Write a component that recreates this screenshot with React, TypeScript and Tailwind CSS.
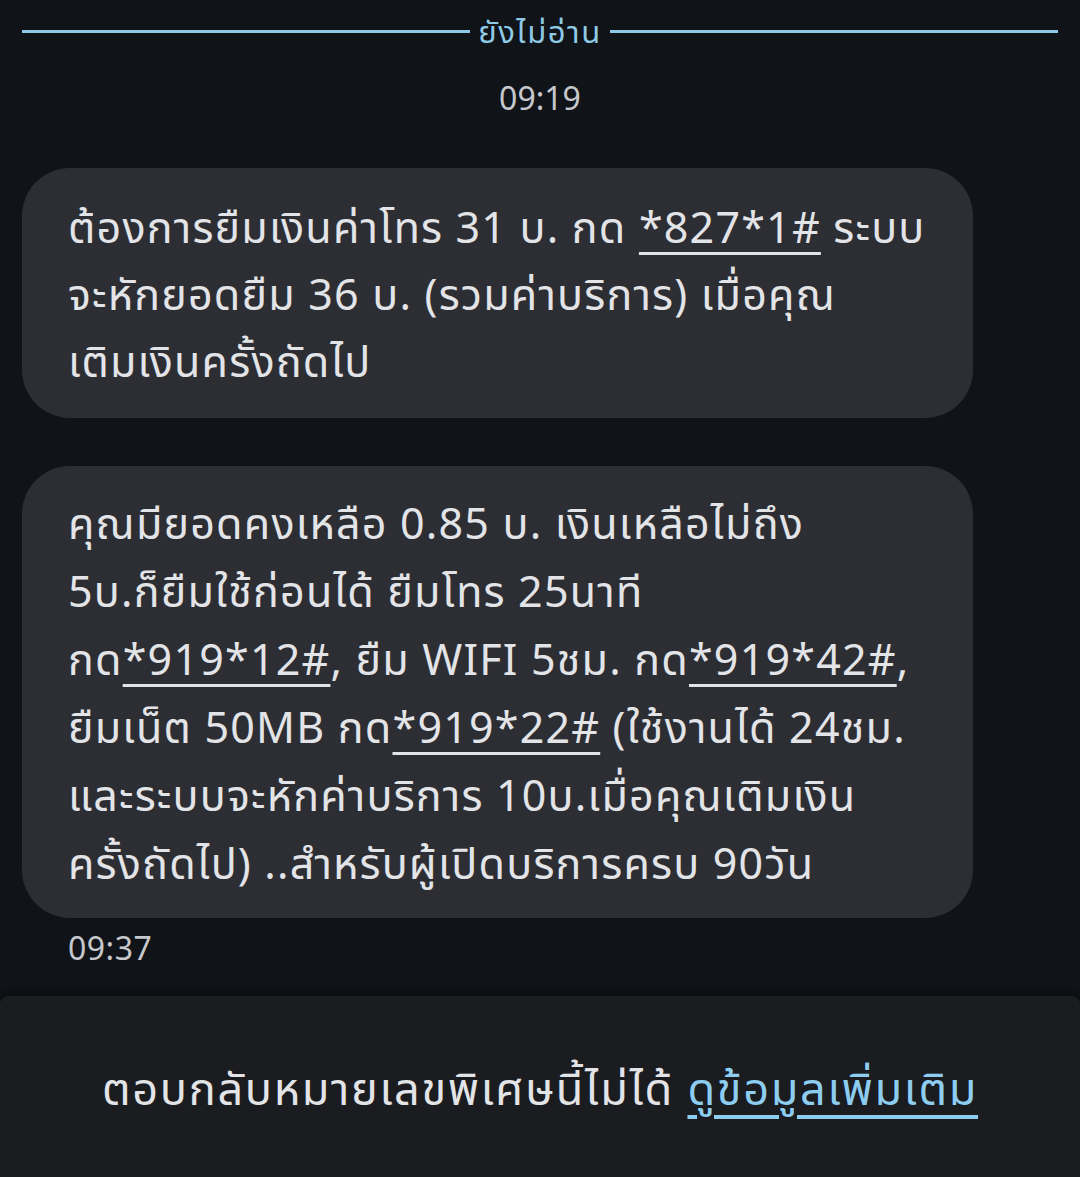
import React from "react";

const font = { fontFamily: '"Noto Sans", "Noto Sans Thai", "Noto Sans Thai Looped", sans-serif' };

function Code({ children }: { children: React.ReactNode }) {
  return <span className="underline decoration-[3px] underline-offset-[9px]">{children}</span>;
}

export default function App() {
  return (
    <div
      className="w-[1080px] h-[1177px] bg-[#101317] text-[#e3e4e7] overflow-hidden flex flex-col"
      style={font}
    >
      {/* unread divider */}
      <div className="flex items-center gap-[8px] px-[22px] pt-[10px]">
        <div className="flex-1 h-[3px] bg-[#8ecae6]" />
        <span className="text-[31px] leading-[42px] tracking-[1.5px] text-[#8ecae6]">ยังไม่อ่าน</span>
        <div className="flex-1 h-[3px] bg-[#8ecae6]" />
      </div>

      <div className="text-center text-[32px] leading-[44px] text-[#c6c8cc] mt-[24px]">09:19</div>

      <div className="px-[22px] mt-[48px] flex flex-col gap-[48px]">
        <div className="w-[951px] bg-[#2c2e33] rounded-[48px] pl-[46px] pr-[30px] pt-[25px] pb-[24px] text-[43px] leading-[67px] tracking-[1.2px] whitespace-nowrap">
          ต้องการยืมเงินค่าโทร 31 บ. กด <Code>*827*1#</Code> ระบบ
          <br />
          จะหักยอดยืม 36 บ. (รวมค่าบริการ) เมื่อคุณ
          <br />
          เติมเงินครั้งถัดไป
        </div>

        <div className="w-[951px] bg-[#2c2e33] rounded-[48px] pl-[46px] pr-[30px] pt-[23px] pb-[21px] text-[43px] leading-[68px] tracking-[1.2px] whitespace-nowrap">
          คุณมียอดคงเหลือ 0.85 บ. เงินเหลือไม่ถึง
          <br />
          5บ.ก็ยืมใช้ก่อนได้ ยืมโทร 25นาที
          <br />
          กด<Code>*919*12#</Code>, ยืม WIFI 5ชม. กด<Code>*919*42#</Code>,
          <br />
          ยืมเน็ต 50MB กด<Code>*919*22#</Code> (ใช้งานได้ 24ชม.
          <br />
          และระบบจะหักค่าบริการ 10บ.เมื่อคุณเติมเงิน
          <br />
          ครั้งถัดไป) ..สำหรับผู้เปิดบริการครบ 90วัน
        </div>
      </div>

      <div className="pl-[68px] mt-[8px] text-[32px] leading-[44px] text-[#c6c8cc] tracking-[0.5px]">09:37</div>

      <div className="mt-[26px] flex-1 bg-[#1a1c20] rounded-t-[8px] shadow-[0_-4px_6px_rgba(0,0,0,0.35)] flex justify-center pt-[62px]">
        <p className="text-[45px] leading-[60px] tracking-[1.7px] text-[#e3e4e7]">
          ตอบกลับหมายเลขพิเศษนี้ไม่ได้{" "}
          <span className="text-[#8dcdf0] underline decoration-[4px] underline-offset-[10px]">ดูข้อมูลเพิ่มเติม</span>
        </p>
      </div>
    </div>
  );
}
